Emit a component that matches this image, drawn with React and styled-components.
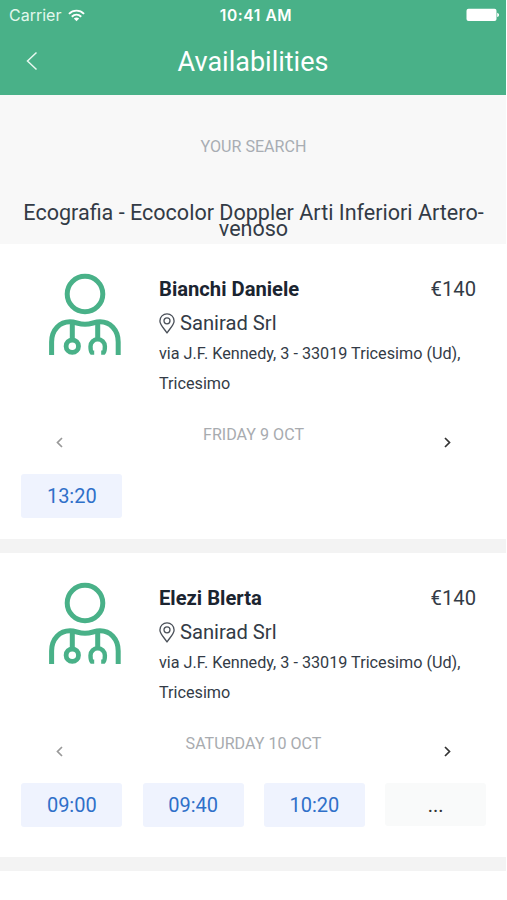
import React from "react";
import styled, { createGlobalStyle } from "styled-components";

const doctors = [
  {
    name: "Bianchi Daniele",
    price: "€140",
    clinic: "Sanirad Srl",
    address: "via J.F. Kennedy, 3 - 33019 Tricesimo (Ud), Tricesimo",
    day: "FRIDAY 9 OCT",
    slots: ["13:20"],
    height: 295
  },
  {
    name: "Elezi Blerta",
    price: "€140",
    clinic: "Sanirad Srl",
    address: "via J.F. Kennedy, 3 - 33019 Tricesimo (Ud), Tricesimo",
    day: "SATURDAY 10 OCT",
    slots: ["09:00", "09:40", "10:20"],
    more: true,
    height: 304
  }
];

const DoctorIcon = () => (
  <svg width="72" height="83" viewBox="49 273 72 83" fill="none" stroke="#49b188" strokeWidth="5">
    <circle cx="85" cy="294" r="17.8" />
    <path d="M51.600 355V342C51.600 329.500 60 321.800 70 321.800C76 321.800 78 324.300 85 324.300S94 321.800 100 321.800C110 321.800 118.200 329.500 118.200 342V355" />
    <path d="M72.300 323V340M97.700 323V339" />
    <circle cx="72.300" cy="346.200" r="6.200" strokeWidth="4.800" />
    <path d="M94.200 352.600H91.800Q90.500 351 90.500 346.500A7.200 7.200 0 0 1 104.900 346.500Q104.900 351 103.600 352.600H101.200" strokeWidth="4.400" />
  </svg>
);

const PinIcon = () => (
  <svg width="16" height="21" viewBox="0 0 16 21" fill="none" stroke="#4a5059" strokeWidth="1.300">
    <path d="M8 20C5.500 16 .9 11.800 .9 7.900A7.100 7.100 0 0 1 15.100 7.900C15.100 11.800 10.500 16 8 20Z" strokeLinejoin="round" />
    <circle cx="8" cy="7.800" r="3" />
  </svg>
);

const WifiIcon = () => (
  <svg width="17" height="13" viewBox="0 0 18 13" fill="none" stroke="#fff" strokeWidth="2">
    <path d="M1 4.700C5.500 .2 12.500 .2 17 4.700" />
    <path d="M4 7.800C7 4.900 11 4.900 14 7.800" />
    <path d="M9 12.600L6.200 9.800C7.800 8.200 10.200 8.200 11.800 9.800Z" fill="#fff" stroke="none" />
  </svg>
);

const BatteryIcon = () => (
  <svg width="34" height="14" viewBox="0 0 34 14" fill="#fff">
    <rect x=".5" y=".8" width="30" height="12.200" rx="2" />
    <path d="M31.200 4.700C33.700 5.500 33.700 8.300 31.200 9.100Z" />
  </svg>
);

const Chevron = ({ flip, color }) => (
  <svg width="8" height="12" viewBox="0 0 8 12" fill="none" stroke={color} strokeWidth="1.700">
    <path d={flip ? "M2 2L6.500 6.500L2 11" : "M6 2L1.500 6.500L6 11"} />
  </svg>
);

const DoctorCard = ({ doctor }) => (
  <Card $height={doctor.height}>
    <Summary>
      <DoctorIcon />
      <Info>
        <NameRow>
          <Name>{doctor.name}</Name>
          <Price>{doctor.price}</Price>
        </NameRow>
        <Clinic>
          <PinIcon />
          <span>{doctor.clinic}</span>
        </Clinic>
        <Address>{doctor.address}</Address>
      </Info>
    </Summary>
    <DayRow>
      <DayButton>
        <Chevron color="#999" />
      </DayButton>
      <Day>{doctor.day}</Day>
      <DayButton>
        <Chevron flip color="#333" />
      </DayButton>
    </DayRow>
    <Slots>
      {doctor.slots.map((slot) => (
        <Slot key={slot}>{slot}</Slot>
      ))}
      {doctor.more && <Slot $more>...</Slot>}
    </Slots>
  </Card>
);

const App = () => {
  return (
    <Screen>
      <GlobalStyle />
      <StatusBar>
        <Carrier>
          <span>Carrier</span>
          <WifiIcon />
        </Carrier>
        <Clock>10:41 AM</Clock>
        <Battery>
          <BatteryIcon />
        </Battery>
      </StatusBar>
      <NavBar>
        <BackButton>
          <svg width="12" height="20" viewBox="0 0 12 20" fill="none" stroke="#e8f8f0" strokeWidth="1.500">
            <path d="M10.500 1.500L1.500 10L10.500 18.500" />
          </svg>
        </BackButton>
        <Title>Availabilities</Title>
      </NavBar>
      <Search>
        <Label>YOUR SEARCH</Label>
        <Query>Ecografia - Ecocolor Doppler Arti Inferiori Artero-venoso</Query>
      </Search>
      {doctors.map((doctor) => (
        <DoctorCard key={doctor.name} doctor={doctor} />
      ))}
    </Screen>
  );
};
export default App;

const GlobalStyle = createGlobalStyle`
  * {
    box-sizing: border-box;
  }
  body {
    margin: 0;
    background-color: #fff;
    font-family: Roboto, sans-serif;
    color: #333b46;
  }
  button {
    font-family: inherit;
    border: 0;
    padding: 0;
    background: none;
    cursor: pointer;
  }
  svg {
    display: block;
    flex-shrink: 0;
  }
`;
const Screen = styled.div`
  width: 506px;
  height: 900px;
  overflow: hidden;
`;
const StatusBar = styled.div`
  display: grid;
  grid-template-columns: 1fr auto 1fr;
  align-items: center;
  height: 30px;
  padding: 0 6px 0 9px;
  background-color: #49b188;
  color: #fff;
  font-family: Inter, sans-serif;
  font-size: 16px;
`;
const Carrier = styled.div`
  display: flex;
  align-items: center;
  gap: 7px;
  color: #e2f8ed;
`;
const Clock = styled.span`
  padding-left: 3px;
  font-size: 15.5px;
  font-weight: 600;
  letter-spacing: 0.6px;
`;
const Battery = styled.div`
  justify-self: end;
`;
const NavBar = styled.div`
  display: grid;
  grid-template-columns: 64px 1fr 64px;
  height: 65px;
  background-color: #49b188;
  color: #fff;
`;
const BackButton = styled.button`
  height: 62px;
  padding-left: 26px;
`;
const Title = styled.h1`
  margin: 0;
  font-size: 27px;
  font-weight: 400;
  line-height: 65px;
  text-align: center;
`;
const Search = styled.div`
  height: 149px;
  padding: 42px 20px 0 21px;
  background-color: #f8f8f8;
  text-align: center;
`;
const Label = styled.div`
  font-size: 16.1px;
  line-height: 20px;
  color: #a8adb3;
`;
const Query = styled.div`
  margin-top: 48px;
  font-size: 21.55px;
  line-height: 16px;
`;
const Card = styled.div`
  height: ${(props) => props.$height + 14}px;
  border-bottom: 14px solid #f3f3f3;
  background-color: #fff;
`;
const Summary = styled.div`
  display: flex;
  gap: 38px;
  height: 168px;
  padding: 29px 30px 0 49px;
`;
const Info = styled.div`
  flex: 1;
`;
const NameRow = styled.div`
  display: flex;
  justify-content: space-between;
  height: 32px;
  font-size: 20.2px;
  line-height: 32px;
`;
const Name = styled.span`
  font-weight: 700;
  color: #1b2430;
`;
const Price = styled.span``;
const Clinic = styled.div`
  display: flex;
  align-items: center;
  gap: 5px;
  height: 36px;
  font-size: 20.2px;
`;
const Address = styled.div`
  width: 310px;
  margin-top: -2px;
  font-size: 16.2px;
  line-height: 30px;
`;
const DayRow = styled.div`
  display: grid;
  grid-template-columns: 40px 1fr 40px;
  height: 62px;
  padding: 12px 39px 0 40px;
`;
const DayButton = styled.button`
  display: flex;
  justify-content: center;
  height: 36px;
  padding-top: 12px;
`;
const Day = styled.div`
  font-size: 16.1px;
  line-height: 22px;
  text-align: center;
  color: #a8abaf;
`;
const Slots = styled.div`
  display: grid;
  grid-template-columns: repeat(4, 101px);
  column-gap: 20.3px;
  padding-left: 21.3px;
`;
const Slot = styled.button`
  height: ${(props) => (props.$more ? 43 : 44)}px;
  border-radius: 3px;
  background-color: ${(props) => (props.$more ? "#f9fafa" : "#eff3fe")};
  color: ${(props) => (props.$more ? "#333" : "#2f70c9")};
  font-size: 20px;
`;
